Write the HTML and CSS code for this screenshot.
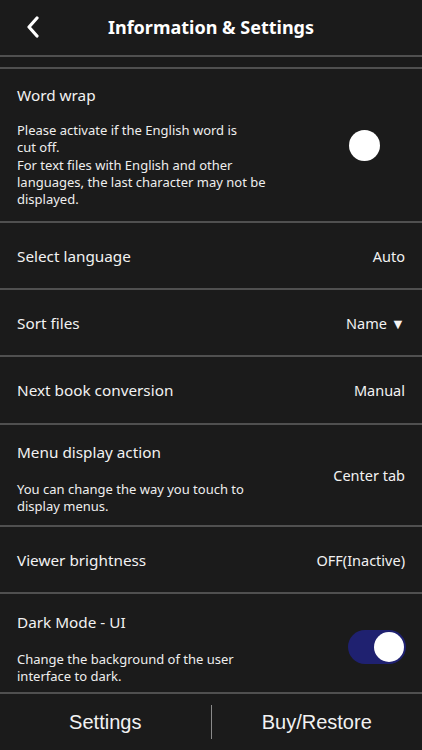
FILE: index.html
```html
<!DOCTYPE html>
<html>
<head>
<meta charset="utf-8">
<link rel="stylesheet" href="styles.css">
</head>
<body>
<div class="app">
  <header class="header">
    <svg class="back" width="14" height="22" viewBox="0 0 14 22"><path d="M11 2 L3 11 L11 20" fill="none" stroke="#fff" stroke-width="3.2" stroke-linecap="round" stroke-linejoin="round"/></svg>
    <h1 class="title">Information &amp; Settings</h1>
  </header>
  <div class="spacer"></div>
  <main class="list">
    <section class="row tall row-wrap">
      <div class="text">
        <div class="label">Word wrap</div>
        <div class="desc">Please activate if the English word is<br>cut off.<br>For text files with English and other<br>languages, the last character may not be<br>displayed.</div>
      </div>
      <div class="toggle off"><span class="knob"></span></div>
    </section>
    <section class="row simple">
      <div class="label">Select language</div>
      <div class="value">Auto</div>
    </section>
    <section class="row simple">
      <div class="label">Sort files</div>
      <div class="value">Name ▼</div>
    </section>
    <section class="row simple s68">
      <div class="label">Next book conversion</div>
      <div class="value">Manual</div>
    </section>
    <section class="row tall row-menu">
      <div class="text">
        <div class="label">Menu display action</div>
        <div class="desc">You can change the way you touch to<br>display menus.</div>
      </div>
      <div class="value">Center tab</div>
    </section>
    <section class="row simple">
      <div class="label">Viewer brightness</div>
      <div class="value">OFF(Inactive)</div>
    </section>
    <section class="row tall row-dark">
      <div class="text">
        <div class="label">Dark Mode - UI</div>
        <div class="desc">Change the background of the user<br>interface to dark.</div>
      </div>
      <div class="toggle on"><span class="knob"></span></div>
    </section>
  </main>
  <nav class="tabbar">
    <div class="tab">Settings</div>
    <div class="sep"></div>
    <div class="tab">Buy/Restore</div>
  </nav>
</div>
</body>
</html>
```

FILE: styles.css
```css
* { box-sizing: border-box; margin: 0; padding: 0; }
html, body { background: #1b1b1b; }
body { font-family: "Noto Sans", "Open Sans", sans-serif; color: #f2f2f2; }
.app { width: 422px; height: 750px; display: flex; flex-direction: column; overflow: hidden; }
.header { height: 57px; flex-shrink: 0; display: flex; align-items: center; justify-content: center; position: relative; border-bottom: 2px solid #505050; }
.back { position: absolute; left: 26px; top: 16px; }
.title { font-size: 18px; font-weight: 700; color: #fff; margin-top: -2px; }
.spacer { height: 12px; flex-shrink: 0; border-bottom: 2px solid #505050; }
.list { flex: 1; display: flex; flex-direction: column; }
.row { display: flex; align-items: center; justify-content: space-between; padding: 0 17px; border-bottom: 2px solid #505050; flex-shrink: 0; }
.label { font-size: 15.3px; line-height: 20px; color: #f2f2f2; }
.value { font-size: 14.5px; color: #f2f2f2; }
.desc { font-size: 13px; line-height: 17.3px; color: #eeeeee; }
.simple { height: 67px; }
.simple.s68 { height: 68px; }
.tall { align-items: flex-start; }
.tall .value, .tall .toggle { align-self: center; }
.row-wrap { height: 154px; padding-top: 16px; }
.row-wrap .desc { margin-top: 17px; }
.row-menu { height: 102px; padding-top: 17px; }
.row-menu .desc { margin-top: 19px; }
.row-menu .value { margin-top: -17px; }
.row-dark { height: 100px; padding-top: 18px; }
.row-dark .desc { margin-top: 19px; }
.toggle { width: 58px; height: 34px; border-radius: 17px; position: relative; flex-shrink: 0; }
.toggle .knob { position: absolute; top: 2px; width: 30px; height: 30px; border-radius: 50%; background: #fff; }
.toggle.off { background: transparent; margin-right: -2px; margin-top: -12px; }
.toggle.off .knob { left: 0; top: 0; width: 31px; height: 31px; }
.toggle.on { background: #1f2170; margin-right: -1px; margin-top: -10px; }
.toggle.on .knob { right: 2px; }
.tabbar { height: 56px; display: flex; align-items: center; }
.tab { flex: 1; text-align: center; font-family: "Liberation Sans", Arial, sans-serif; font-size: 20px; color: #f2f2f2; }
.sep { width: 1px; height: 34px; background: #8a8a8a; }
```
